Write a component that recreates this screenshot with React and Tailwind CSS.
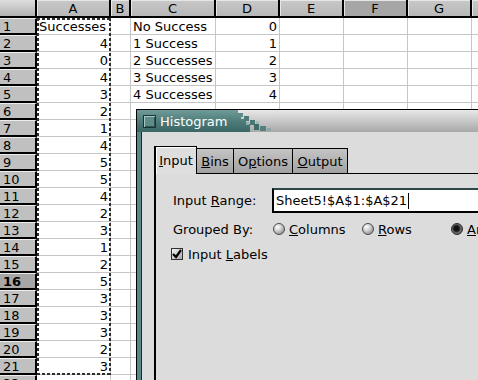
import clsx from "clsx";

const COLS = [
  { key: "A", w: "w-[74px]" },
  { key: "B", w: "w-[20px]" },
  { key: "C", w: "w-[85px]" },
  { key: "D", w: "w-[64px]" },
  { key: "E", w: "w-[64px]" },
  { key: "F", w: "w-[64px]" },
  { key: "G", w: "w-[64px]" },
  { key: "H", w: "w-[64px]" },
];

const COL_A = ["Successes", "4", "0", "4", "3", "2", "1", "4", "5", "5", "4", "2", "3", "1", "2", "5", "3", "3", "3", "2", "3"];
const COL_C = ["No Success", "1 Success", "2 Successes", "3 Successes", "4 Successes"];
const COL_D = ["0", "1", "2", "3", "4"];

function cellValue(col, n) {
  if (col === "A") return COL_A[n - 1];
  if (col === "C") return COL_C[n - 1];
  if (col === "D") return COL_D[n - 1];
  return undefined;
}

function HeaderRow() {
  return (
    <div className="flex h-[18px]">
      <div className="w-[37px] shrink-0 border-r-2 border-b-2 border-black bg-gradient-to-b from-[#dedede] to-[#b2b2b2]" />
      {COLS.map((c) => (
        <div
          key={c.key}
          className={clsx(
            c.w,
            "shrink-0 border-r-2 border-b-2 border-black flex items-center justify-center shadow-[inset_1px_1px_0_#e6e6e6]",
            c.key === "F" ? "bg-[#a6a6a6]" : "bg-gradient-to-b from-[#c8c8c8] to-[#b8b8b8]"
          )}
        >
          {c.key}
        </div>
      ))}
    </div>
  );
}

function Row({ n }) {
  return (
    <div className="flex h-[17px]">
      <div
        className={clsx(
          "w-[37px] shrink-0 border-r-2 border-b-2 border-black border-t border-t-[#ececec] pl-[3px] flex items-center",
          n === 16 ? "bg-[#a6a6a6] font-bold" : "bg-[#c0c0c0]"
        )}
      >
        {n}
      </div>
      {COLS.map((c) => {
        const v = cellValue(c.key, n);
        const isNum = v !== undefined && /^\d+$/.test(v);
        return (
          <div
            key={c.key}
            className={clsx(
              c.w,
              "shrink-0 border-r border-b border-[#c6c6c6] bg-white flex items-center whitespace-nowrap overflow-visible",
              isNum ? "justify-end pr-[2px]" : "pl-[2px]"
            )}
          >
            {v}
          </div>
        );
      })}
    </div>
  );
}

function Radio({ checked, children }) {
  return (
    <div className="w-[89px] shrink-0 flex items-center gap-[4px]">
      <span
        className={clsx(
          "w-[12px] h-[12px] rounded-full border shrink-0",
          checked
            ? "border-[#2a2a2a] bg-[radial-gradient(circle_at_45%_45%,#111111_0%,#111111_32%,#707070_58%,#3a3a3a_100%)]"
            : "border-[#4a4a4a] bg-[radial-gradient(circle_at_35%_30%,#ffffff_0%,#d0d0d0_40%,#8c8c8c_85%,#6a6a6a_100%)]"
        )}
      />
      <span className="whitespace-nowrap">{children}</span>
    </div>
  );
}

function TitleBlocks() {
  return (
    <svg width="40" height="22" viewBox="0 0 40 22" className="shrink-0 block">
      <defs>
        <linearGradient id="gg" x1="0" y1="0" x2="0" y2="1">
          <stop offset="0" stopColor="#e8e8e8" />
          <stop offset="1" stopColor="#a8a8a8" />
        </linearGradient>
        <linearGradient id="tg" x1="0" y1="0" x2="0" y2="1">
          <stop offset="0" stopColor="#6f9c99" />
          <stop offset="0.5" stopColor="#4f7d7b" />
          <stop offset="1" stopColor="#3a6664" />
        </linearGradient>
      </defs>
      <rect width="40" height="22" fill="url(#gg)" />
      <path d="M0 0h4v4h3v5h5v5h4v8H0z" fill="url(#tg)" />
      <rect x="4" y="3" width="5" height="4" fill="#5f8c89" />
      <rect x="10" y="6" width="5" height="5" fill="#4d7a78" />
      <rect x="16" y="10" width="5" height="5" fill="#4a7775" />
      <rect x="20" y="14" width="5" height="6" fill="#3f6c6a" />
      <rect x="26" y="16" width="6" height="5" fill="#557f7d" />
      <rect x="33" y="18" width="4" height="3" fill="#8aa8a6" />
      <rect x="12" y="12" width="3" height="3" fill="#8fb0ad" />
      <rect x="22" y="11" width="3" height="3" fill="#9fbcb9" />
    </svg>
  );
}

function Dialog() {
  return (
    <div className="absolute left-[136px] top-[109px] right-0 bottom-0 flex flex-col border-t border-l border-black">
      <div className="h-[22px] flex shrink-0">
        <div className="w-[97px] shrink-0 bg-gradient-to-b from-[#6f9c99] via-[#4f7d7b] to-[#3a6664] flex items-center pl-[6px] gap-[4px] overflow-visible">
          <span className="w-[13px] h-[13px] shrink-0 border border-[#1d3333] bg-[#5d8b88] shadow-[inset_1px_1px_0_#a9c8c5,inset_-1px_-1px_0_#2f5553]" />
          <span className="text-white whitespace-nowrap relative z-10">Histogram</span>
        </div>
        <TitleBlocks />
        <div className="flex-1 bg-gradient-to-b from-[#e8e8e8] to-[#a8a8a8]" />
      </div>
      <div className="flex-1 flex bg-[#dcdcdc]">
        <div className="w-[5px] shrink-0 bg-[#5a8886] border-r border-[#1c2c2c]" />
        <div className="flex-1 flex flex-col pl-[12px] pt-[14px]">
          <div className="flex items-end h-[28px] shrink-0">
            <div className="w-[43px] h-[28px] shrink-0 border-l-2 border-t border-r border-black bg-[#dedede] shadow-[inset_1px_1px_0_#ffffff] flex items-center justify-center">
              <span>
                <span className="underline">I</span>nput
              </span>
            </div>
            <div className="w-[37px] h-[26px] shrink-0 border-t border-r border-b border-black bg-gradient-to-b from-[#c4c4c4] to-[#a2a2a2] flex items-center justify-center">
              <span>
                <span className="underline">B</span>ins
              </span>
            </div>
            <div className="w-[59px] h-[26px] shrink-0 border-t border-r border-b border-black bg-gradient-to-b from-[#c4c4c4] to-[#a2a2a2] flex items-center justify-center">
              <span>
                O<span className="underline">p</span>tions
              </span>
            </div>
            <div className="w-[55px] h-[26px] shrink-0 border-t border-r border-b border-black bg-gradient-to-b from-[#c4c4c4] to-[#a2a2a2] flex items-center justify-center">
              <span>
                <span className="underline">O</span>utput
              </span>
            </div>
            <div className="flex-1 border-b border-black" />
          </div>
          <div className="flex-1 border-l-2 border-black pl-[17px] pt-[14px] flex flex-col">
            <div className="flex items-center h-[25px]">
              <div className="w-[99px] shrink-0 whitespace-nowrap">
                Input <span className="underline">R</span>ange:
              </div>
              <div className="flex-1 h-[25px] border-2 border-black border-t-[#2c4746] bg-white pl-[2px] flex items-center whitespace-nowrap">
                Sheet5!$A$1:$A$21
                <span className="w-px h-[16px] bg-black ml-[1px]" />
              </div>
            </div>
            <div className="flex items-center h-[22px] mt-[5px]">
              <div className="w-[100px] shrink-0 whitespace-nowrap">Grouped By:</div>
              <Radio>
                <span className="underline">C</span>olumns
              </Radio>
              <Radio>
                <span className="underline">R</span>ows
              </Radio>
              <Radio checked>
                <span className="underline">A</span>reas
              </Radio>
            </div>
            <div className="flex items-center h-[22px] mt-[3px] -ml-[2px] gap-[5px]">
              <span className="w-[12px] h-[12px] shrink-0 border border-[#303030] bg-gradient-to-br from-[#f4f4f4] to-[#a8a8a8] flex items-center justify-center">
                <svg width="10" height="10" viewBox="0 0 10 10">
                  <path d="M1 5l3 3 5-7" fill="none" stroke="#000" strokeWidth="2.2" />
                </svg>
              </span>
              <span className="whitespace-nowrap">
                Input <span className="underline">L</span>abels
              </span>
            </div>
          </div>
        </div>
      </div>
    </div>
  );
}

export default function App() {
  const rows = Array.from({ length: 22 }, (_, i) => i + 1);
  return (
    <div className="relative w-[478px] h-[380px] overflow-hidden bg-white text-black text-[13px] leading-none font-['DejaVu_Sans',sans-serif]">
      <HeaderRow />
      {rows.map((n) => (
        <Row key={n} n={n} />
      ))}
      <div className="absolute left-[37px] top-[18px] w-[74px] h-[357px]">
        <div className="absolute left-0 top-0 bottom-0 w-[2px] bg-[repeating-linear-gradient(to_bottom,#2e2e2e_0px,#2e2e2e_3px,transparent_3px,transparent_5px)]" />
        <div className="absolute right-0 top-0 bottom-0 w-[2px] bg-[repeating-linear-gradient(to_bottom,#2e2e2e_0px,#2e2e2e_3px,transparent_3px,transparent_5px)]" />
        <div className="absolute left-0 right-0 top-0 h-[2px] bg-[repeating-linear-gradient(to_right,#2e2e2e_0px,#2e2e2e_3px,transparent_3px,transparent_5px)]" />
        <div className="absolute left-0 right-0 bottom-0 h-[2px] bg-[repeating-linear-gradient(to_right,#2e2e2e_0px,#2e2e2e_3px,transparent_3px,transparent_5px)]" />
      </div>
      <Dialog />
    </div>
  );
}
